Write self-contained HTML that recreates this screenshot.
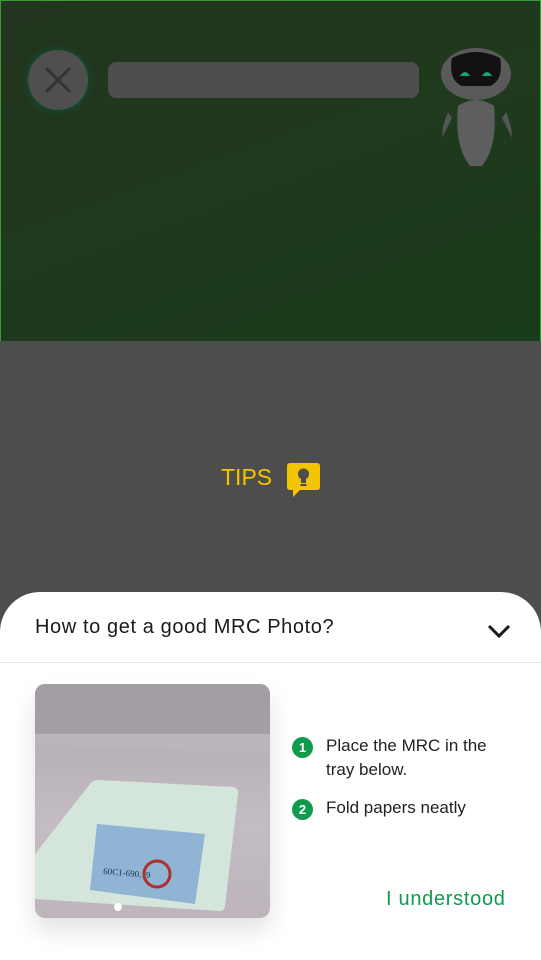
<!DOCTYPE html>
<html><head><meta charset="utf-8"><style>
*{margin:0;padding:0;box-sizing:border-box}
body{width:541px;height:960px;overflow:hidden;background:#4d4d4d;font-family:"Liberation Sans",sans-serif;position:relative}
.top{position:absolute;left:0;top:0;width:541px;height:341px;background:linear-gradient(160deg,#23341f 0%,#1f3a1d 50%,#183b19 100%);border:1px solid #3c9a3c;border-bottom:none}
.close{position:absolute;left:28px;top:50px;width:60px;height:60px;border-radius:50%;background:#4f4f4f;box-shadow:0 0 8px #0b5a3a}
.bar{position:absolute;left:108px;top:62px;width:311px;height:36px;border-radius:8px;background:#4d4d4d}
.tips{position:absolute;left:221px;top:464px;color:#f2c500;font-size:23px}
.sheet{position:absolute;left:0;top:592px;width:541px;height:368px;background:#fff;border-radius:40px 40px 0 0}
.title{position:absolute;left:35px;top:616px;font-size:20px;color:#1a1a1a;letter-spacing:0.6px}
.div{position:absolute;left:0;top:662px;width:541px;height:1px;background:#e8e8e8}
.photo{position:absolute;left:35px;top:684px;width:235px;height:234px;border-radius:10px;overflow:hidden;background:linear-gradient(180deg,#a8a3a8 0%,#b7b1b7 25%,#c3bcc3 60%,#bdb4bc 100%);box-shadow:0 12px 24px rgba(0,0,0,.12)}
.num{position:absolute;width:21px;height:21px;border-radius:50%;background:#0f9a4e;color:#fff;font-size:13px;font-weight:bold;text-align:center;line-height:21px}
.t{position:absolute;left:326px;font-size:17px;color:#222;line-height:24px}
.ok{position:absolute;left:386px;top:888px;color:#0f9a4e;font-size:20px;letter-spacing:0.7px}
</style></head><body>
<div class="top"></div>
<div class="close"><svg width="60" height="60"><path d="M19 19L41 41M41 19L19 41" stroke="#333" stroke-width="3" stroke-linecap="round"/></svg></div>
<div class="bar"></div>
<svg style="position:absolute;left:438px;top:46px" width="84" height="124">
<ellipse cx="38" cy="28" rx="35" ry="26" fill="#5a5a5a"/>
<path d="M14 12Q38 0 62 12Q66 34 52 40H24Q10 34 14 12Z" fill="#111"/>
<path d="M22 30Q27 22 32 30Z" fill="#16a37a"/><path d="M44 30Q49 22 54 30Z" fill="#16a37a"/>
<path d="M20 60Q38 48 56 60Q60 100 44 120H32Q16 100 20 60Z" fill="#5e5e5e"/>
<path d="M10 66Q4 80 4 92L14 72Z" fill="#555"/><path d="M68 66Q74 80 74 92L64 72Z" fill="#555"/>
</svg>
<div class="tips">TIPS</div>
<svg style="position:absolute;left:287px;top:463px" width="34" height="34"><path d="M3 0H30Q33 0 33 3V24Q33 27 30 27H13L6 34V27H3Q0 27 0 24V3Q0 0 3 0Z" fill="#f2c500"/><circle cx="16.5" cy="11" r="5.5" fill="#4d4d4d"/><rect x="14" y="15" width="5" height="5" fill="#4d4d4d"/><rect x="13.5" y="21" width="6" height="2" fill="#4d4d4d"/></svg>
<div class="sheet"></div>
<div class="title">How to get a good MRC Photo?</div>
<svg style="position:absolute;left:486px;top:622px" width="26" height="18"><path d="M3 4L13 14L23 4" stroke="#1a1a1a" stroke-width="3" fill="none"/></svg>
<div class="div"></div>
<div class="photo"><svg width="235" height="234">
<rect x="0" y="0" width="235" height="50" fill="#a39ea4"/>
<path d="M0 50H235V70L0 60Z" fill="#bbb4bc"/>
<path d="M55 100Q58 96 64 96L198 103Q204 104 203 110L190 222Q189 228 183 227L0 215V170Z" fill="#d4e6dc"/>
<path d="M62 140L170 150L160 220L55 206Z" fill="#8fb4d4"/>
<text x="68" y="190" font-size="9" fill="#1d3550" font-family="Liberation Serif" transform="rotate(5 68 190)">60C1-690.19</text>
<circle cx="122" cy="190" r="13" fill="none" stroke="#b03030" stroke-width="3"/>
<circle cx="83" cy="223" r="4" fill="#fff"/>
</svg></div>
<div class="num" style="left:292px;top:737px">1</div>
<div class="t" style="top:734px">Place the MRC in the<br>tray below.</div>
<div class="num" style="left:292px;top:799px">2</div>
<div class="t" style="top:796px">Fold papers neatly</div>
<div class="ok">I understood</div>
</body></html>
